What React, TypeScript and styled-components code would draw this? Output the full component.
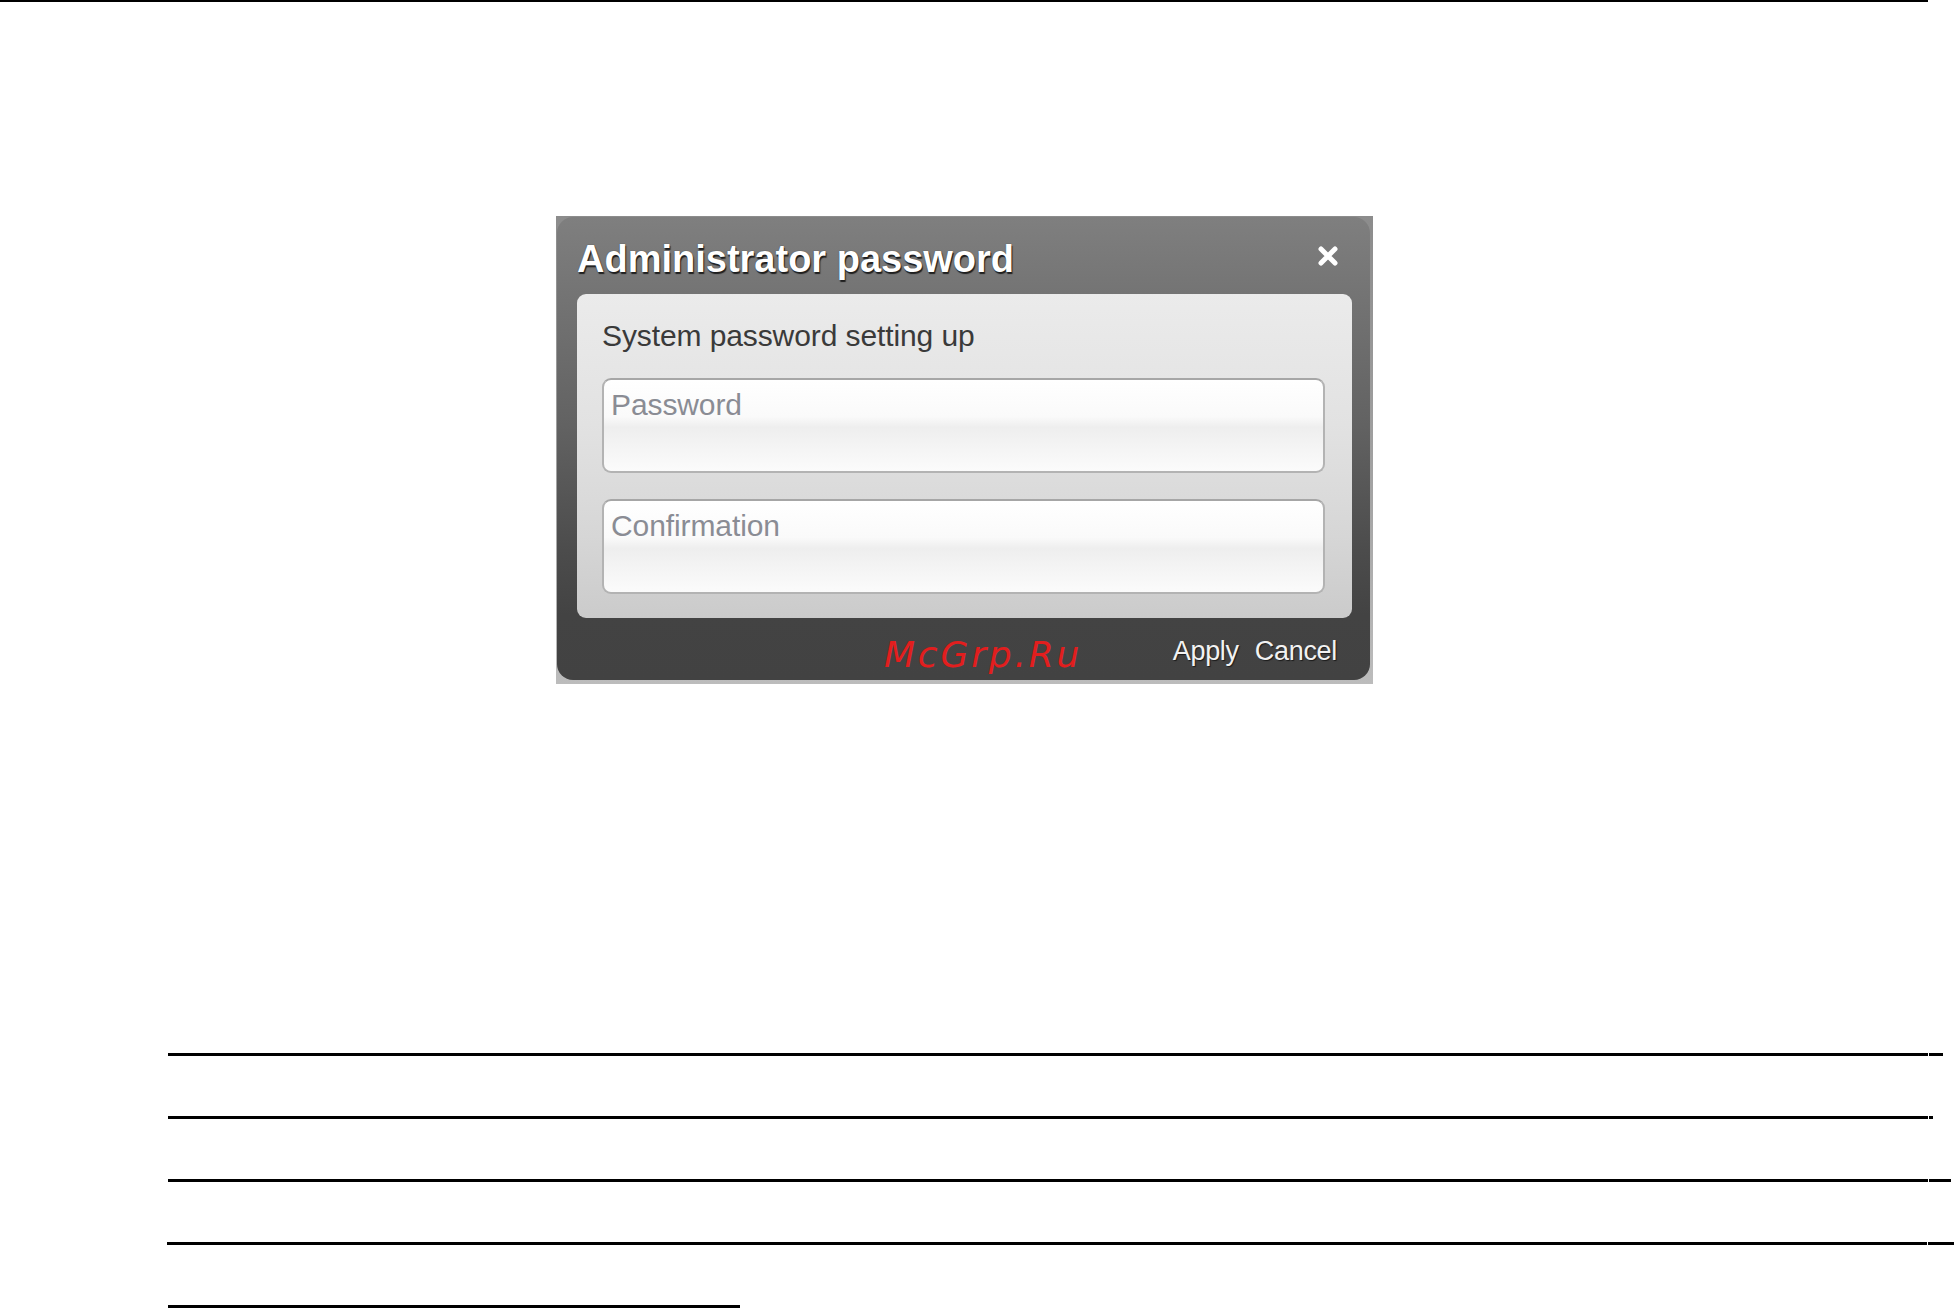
import React from "react";
import styled, { createGlobalStyle } from "styled-components";

const GlobalStyle = createGlobalStyle`
  html, body {
    margin: 0;
    padding: 0;
    background: #ffffff;
    font-family: "Liberation Sans", Arial, sans-serif;
  }
  #root {
    width: 1954px;
    min-height: 1309px;
    overflow: hidden;
  }
`;

const Page = styled.div`
  display: flex;
  flex-direction: column;
  width: 1954px;
  height: 1309px;
  overflow: hidden;
`;

const TopRule = styled.div`
  width: 1928px;
  height: 2px;
  background: #000;
`;

const Figure = styled.div`
  margin-top: 214px;
  margin-left: 556px;
  width: 817px;
  height: 468px;
  box-sizing: border-box;
  padding: 1px 3px 4px 1px;
  background: linear-gradient(to bottom, #8c8c8c 0%, #a4a4a4 60%, #bcbcbc 100%);
  position: relative;
  display: flex;
`;

const Dialog = styled.div`
  flex: 1;
  display: flex;
  flex-direction: column;
  border-radius: 16px;
  background: linear-gradient(
    to bottom,
    #7f7f7f 0%,
    #737373 18%,
    #626262 45%,
    #4c4c4c 72%,
    #434343 86%,
    #424242 100%
  );
  overflow: hidden;
`;

const TitleBar = styled.div`
  height: 77px;
  box-sizing: border-box;
  display: flex;
  align-items: flex-start;
  justify-content: space-between;
  padding: 20px 30px 0 20px;
`;

const Title = styled.h1`
  margin: 0;
  font-family: "Liberation Sans", Arial, sans-serif;
  font-weight: 700;
  font-size: 38px;
  line-height: 44px;
  letter-spacing: 0;
  color: #ffffff;
  text-shadow: 1px 2px 1px #1e1e1e, 0 0 1px #333;
`;

const CloseButton = styled.button`
  margin-top: 7px;
  width: 24px;
  height: 24px;
  padding: 0;
  border: 0;
  background: transparent;
  display: flex;
  align-items: center;
  justify-content: center;
  cursor: pointer;
`;

const Panel = styled.div`
  margin: 0 18px 0 20px;
  height: 324px;
  box-sizing: border-box;
  border-radius: 9px;
  background: linear-gradient(to bottom, #ebebeb 0%, #e2e2e2 40%, #d6d6d6 75%, #cbcbcb 100%);
  padding: 25px 27px 0 25px;
  display: flex;
  flex-direction: column;
`;

const Label = styled.div`
  font-family: "Liberation Sans", Arial, sans-serif;
  font-size: 30px;
  line-height: 34px;
  color: #3a3a3a;
  letter-spacing: -0.1px;
`;

const Field = styled.input<{ $gap: number }>`
  box-sizing: border-box;
  width: 100%;
  height: 95px;
  margin-top: ${(p) => p.$gap}px;
  border: 2px solid #b3b3b3;
  border-top-color: #a6a6a6;
  border-radius: 9px;
  padding: 9px 7px 50px;
  font-family: "Liberation Sans", Arial, sans-serif;
  font-size: 30px;
  line-height: 32px;
  color: #333;
  outline: none;
  background: linear-gradient(
    to bottom,
    #ffffff 0%,
    #fafafa 40%,
    #eeeeee 52%,
    #f3f3f3 70%,
    #fbfbfb 100%
  );
  &::placeholder {
    color: #8a8c94;
    letter-spacing: -0.1px;
  }
`;

const Footer = styled.div`
  flex: 1;
  display: flex;
  align-items: center;
  justify-content: flex-end;
  gap: 16px;
  padding: 4px 33px 0 0;
`;

const FooterButton = styled.button`
  border: 0;
  padding: 0;
  background: transparent;
  font-family: "Liberation Sans", Arial, sans-serif;
  font-size: 27px;
  line-height: 31px;
  color: #f2f2f2;
  letter-spacing: -0.3px;
  text-shadow: 1px 1px 1px #1a1a1a;
  cursor: pointer;
`;

const Watermark = styled.div`
  position: absolute;
  left: 328px;
  top: 421px;
  font-family: "DejaVu Sans", sans-serif;
  font-style: italic;
  font-size: 36px;
  line-height: 36px;
  letter-spacing: 2.8px;
  color: #e21e1e;
  pointer-events: none;
`;

const BlankLines = styled.div`
  margin-top: 369px;
  display: flex;
  flex-direction: column;
  gap: 60px;
`;

const RuleRow = styled.div<{ $indent: number }>`
  display: flex;
  gap: 1px;
  padding-left: ${(p) => p.$indent}px;
`;

const Segment = styled.div<{ $w: number }>`
  width: ${(p) => p.$w}px;
  height: 3px;
  background: #000;
`;

const CloseIcon = () => (
  <svg width="22" height="22" viewBox="0 0 22 22" aria-hidden="true">
    <path
      d="M4 4 L18 18 M18 4 L4 18"
      stroke="#ffffff"
      strokeWidth="5"
      strokeLinecap="round"
      fill="none"
    />
  </svg>
);

const rules: { indent: number; main: number; tail: number }[] = [
  { indent: 168, main: 1760, tail: 14 },
  { indent: 168, main: 1760, tail: 4 },
  { indent: 168, main: 1760, tail: 22 },
  { indent: 167, main: 1761, tail: 26 },
  { indent: 168, main: 572, tail: 0 },
];

export default function App() {
  return (
    <>
      <GlobalStyle />
      <Page>
        <TopRule />
        <Figure>
          <Dialog>
            <TitleBar>
              <Title>Administrator password</Title>
              <CloseButton aria-label="Close">
                <CloseIcon />
              </CloseButton>
            </TitleBar>
            <Panel>
              <Label>System password setting up</Label>
              <Field $gap={25} type="password" placeholder="Password" />
              <Field $gap={26} type="password" placeholder="Confirmation" />
            </Panel>
            <Footer>
              <FooterButton>Apply</FooterButton>
              <FooterButton>Cancel</FooterButton>
            </Footer>
          </Dialog>
          <Watermark>McGrp.Ru</Watermark>
        </Figure>
        <BlankLines>
          {rules.map((r, i) => (
            <RuleRow key={i} $indent={r.indent}>
              <Segment $w={r.main} />
              {r.tail > 0 && <Segment $w={r.tail} />}
            </RuleRow>
          ))}
        </BlankLines>
      </Page>
    </>
  );
}
